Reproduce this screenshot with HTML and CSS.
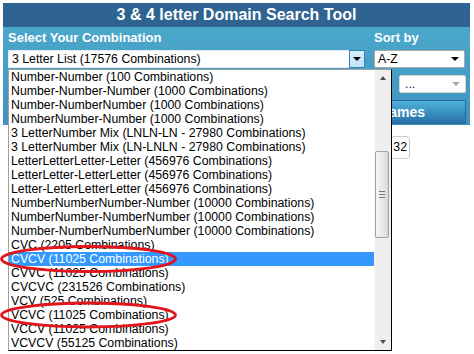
FILE: index.html
```html
<!DOCTYPE html>
<html lang="en">
<head>
    <meta charset="UTF-8">
    <title>3 &amp; 4 letter Domain Search Tool</title>
    <link rel="stylesheet" href="styles.css">
</head>
<body>
    <div class="tool">
        <h1 class="head">3 &amp; 4 letter Domain Search Tool</h1>
        <div class="panel">
            <div class="field">
                <label class="label">Select Your Combination</label>
                <div class="combo">
                    <span class="combo-text">3 Letter List (17576 Combinations)</span>
                    <span class="combo-btn"><i class="arrow"></i></span>
                </div>
            </div>
            <div class="field">
                <label class="label">Sort by</label>
                <div class="sort"><span>A-Z</span><i class="arrow"></i></div>
                <div class="mini"><span>...</span><i class="arrow gray"></i></div>
            </div>
            <button class="go">Search Domain Names</button>
        </div>
        <div class="pager">
            <span class="page">1</span>
            <span class="page">2</span>
            <span class="page">32</span>
        </div>
    </div>

    <!-- open dropdown list -->
    <div class="droplist">
        <ul class="options">
            <li>Number-Number (100 Combinations)</li>
            <li>Number-Number-Number (1000 Combinations)</li>
            <li>Number-NumberNumber (1000 Combinations)</li>
            <li>NumberNumber-Number (1000 Combinations)</li>
            <li>3 LetterNumber Mix (LNLN-LN - 27980 Combinations)</li>
            <li>3 LetterNumber Mix (LN-LNLN - 27980 Combinations)</li>
            <li>LetterLetterLetter-Letter (456976 Combinations)</li>
            <li>LetterLetter-LetterLetter (456976 Combinations)</li>
            <li>Letter-LetterLetterLetter (456976 Combinations)</li>
            <li>NumberNumberNumber-Number (10000 Combinations)</li>
            <li>NumberNumber-NumberNumber (10000 Combinations)</li>
            <li>Number-NumberNumberNumber (10000 Combinations)</li>
            <li>CVC (2205 Combinations)</li>
            <li class="sel">CVCV (11025 Combinations)</li>
            <li>CVVC (11025 Combinations)</li>
            <li>CVCVC (231526 Combinations)</li>
            <li>VCV (525 Combinations)</li>
            <li>VCVC (11025 Combinations)</li>
            <li>VCCV (11025 Combinations)</li>
            <li>VCVCV (55125 Combinations)</li>
        </ul>
        <div class="scroll">
            <div class="sb-btn"><i class="tri up"></i></div>
            <div class="sb-track">
                <div class="thumb"><i class="grip"></i></div>
            </div>
            <div class="sb-btn"><i class="tri"></i></div>
        </div>
    </div>

    <svg class="marks" width="474" height="354" viewBox="0 0 474 354">
        <ellipse cx="88.5" cy="259" rx="87" ry="12.5" />
        <ellipse cx="88.5" cy="315" rx="87" ry="12" />
    </svg>
</body>
</html>
```

FILE: styles.css
```css
body {
    margin: 0;
    background: #fff;
    font-family: "Liberation Sans", Arial, sans-serif;
}
.tool {
    margin: 3px 0 0 3px;
    width: 467px;
}
.head {
    margin: 0;
    height: 24px;
    line-height: 24px;
    background: #2f6392;
    color: #fff;
    font-size: 16px;
    font-weight: bold;
    text-align: center;
}
.panel {
    display: grid;
    grid-template-columns: 357px 91px;
    column-gap: 9px;
    padding: 3px 5px 1px 5px;
    background: linear-gradient(#4ba8ca, #3f93c0);
}
.label {
    display: block;
    height: 16px;
    line-height: 16px;
    font-size: 13px;
    font-weight: bold;
    color: #fff;
}
.combo {
    margin-top: 4px;
    height: 18px;
    display: flex;
    background: #fff;
    width: 357px;
    box-sizing: border-box;
    border: 1px solid #e4eef4;
    border-right: 0;
}
.combo-text {
    flex: 1;
    font-size: 12.3px;
    line-height: 16px;
    padding-left: 3px;
}
.combo-btn {
    width: 14px;
    background: linear-gradient(#d9effc, #bfe2f7);
    border: 1px solid #3c7fb1;
    margin-top: -1px;
    margin-bottom: -1px;
    display: flex;
    align-items: center;
    justify-content: center;
}
.arrow {
    width: 0;
    height: 0;
    border-left: 4px solid transparent;
    border-right: 4px solid transparent;
    border-top: 4px solid #000;
}
.arrow.gray {
    border-top-color: #a8a8a8;
}
.sort, .mini {
    display: flex;
    align-items: center;
    justify-content: space-between;
    box-sizing: border-box;
    height: 18px;
    background: #fff;
    border: 1px solid #a9a9a9;
    border-radius: 2px;
    font-size: 12.3px;
    padding: 0 5px 0 3px;
}
.sort {
    margin-top: 4px;
}
.mini {
    margin: 7px 0 0 25px;
    width: 67px;
    border-color: #d4d4d4;
    color: #1a1a60;
    padding-left: 5px;
}
.go {
    grid-column: 1 / -1;
    margin-top: 7px;
    height: 24px;
    width: 458px;
    border: 1px solid #2a6a9c;
    background: linear-gradient(#4fb3d6, #3a90c2 50%, #2b72a9);
    color: #fff;
    font-family: "Liberation Sans", Arial, sans-serif;
    font-size: 14px;
    font-weight: bold;
    text-align: right;
    padding: 0 40px 0 0;
}
.pager {
    display: flex;
    justify-content: flex-end;
    gap: 4px;
    margin-top: 11px;
    padding-right: 60px;
}
.page {
    height: 23px;
    line-height: 21px;
    box-sizing: border-box;
    padding: 0 2px;
    border: 1px solid #c8c8c8;
    border-radius: 4px;
    font-size: 12.3px;
    background: #fff;
}

.droplist {
    position: absolute;
    left: 8px;
    top: 69px;
    width: 384px;
    height: 282px;
    box-sizing: border-box;
    border: 1px solid;
    border-color: #a0a0a0 #000 #000 #a0a0a0;
    background: #fff;
    display: flex;
}
.options {
    flex: 1;
    list-style: none;
    margin: 0;
    padding: 0;
    font-size: 12.3px;
    line-height: 14px;
    overflow: hidden;
}
.options li {
    padding-left: 2px;
    white-space: nowrap;
}
.options .sel {
    background: #3399ff;
    color: #fff;
}
.scroll {
    width: 16px;
    display: flex;
    flex-direction: column;
    background: #efefef;
    border-left: 1px solid #f6f6f6;
}
.sb-btn {
    height: 16px;
    display: flex;
    align-items: center;
    justify-content: center;
}
.tri {
    width: 0;
    height: 0;
    border-left: 3px solid transparent;
    border-right: 3px solid transparent;
    border-top: 4px solid #505050;
}
.tri.up {
    border-top: 0;
    border-bottom: 4px solid #505050;
}
.sb-track {
    flex: 1;
}
.thumb {
    margin-top: 65px;
    height: 87px;
    width: 14px;
    box-sizing: border-box;
    border: 1px solid #a4a4a4;
    border-radius: 2px;
    background: linear-gradient(to right, #f6f6f6, #e8e8e8 60%, #d6d6d6);
    display: flex;
    align-items: center;
    justify-content: center;
}
.grip {
    width: 6px;
    height: 1px;
    background: #777;
    box-shadow: 0 -3px 0 #777, 0 3px 0 #777;
}
.marks {
    position: absolute;
    left: 0;
    top: 0;
    pointer-events: none;
}
.marks ellipse {
    fill: none;
    stroke: #e2141c;
    stroke-width: 2.8;
}
```
